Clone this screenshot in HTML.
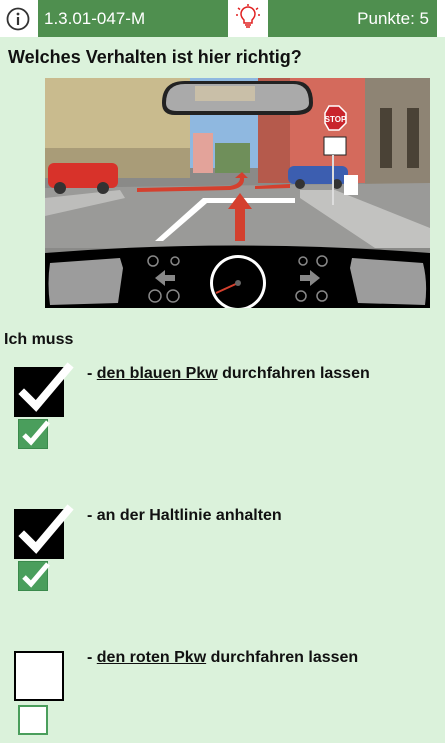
<!DOCTYPE html>
<html><head><meta charset="utf-8"><style>
*{margin:0;padding:0;box-sizing:border-box}
body{width:445px;height:743px;background:#dbf2db;font-family:"Liberation Sans",Arial,sans-serif;position:relative;overflow:hidden;color:#111}
.hdr{position:absolute;left:0;top:0;width:445px;height:37px;background:#fff}
.g{position:absolute;top:0;height:37px;background:#4f8f4f;color:#fff;font-size:17px;line-height:37px}
.q{position:absolute;left:8px;top:47px;font-size:18px;font-weight:bold}
.ich{position:absolute;left:4px;top:331px;font-size:16px;font-weight:bold}
.bb{position:absolute;left:14px;width:50px;height:50px;border:2px solid #000;background:#000}
.bb.e{background:#fff}
.sb{position:absolute;left:18px;width:30px;height:30px;background:#4a9e5c;border:1px solid #3a8a4c}
.sb.e{background:#fff;border:2px solid #4a9e5c}
.t{position:absolute;left:87px;font-size:16px;font-weight:bold}
.t u{text-decoration:underline}
</style></head><body>
<div class="hdr">
 <svg style="position:absolute;left:6px;top:7px" width="24" height="24" viewBox="0 0 24 24"><circle cx="12" cy="12" r="10.5" fill="none" stroke="#333" stroke-width="1.8"/><circle cx="12" cy="7" r="1.4" fill="#333"/><rect x="10.9" y="10" width="2.2" height="8" fill="#333"/></svg>
 <div class="g" style="left:38px;width:190px;padding-left:6px">1.3.01-047-M</div>
 <svg style="position:absolute;left:234px;top:3px" width="28" height="28" viewBox="0 0 28 28" fill="none" stroke="#e02020" stroke-width="1.5"><path d="M10 17c-2-2-3-3.5-3-6a7 7 0 0 1 14 0c0 2.5-1 4-3 6v3h-8z"/><path d="M11 22h6M12 24h4"/><path d="M14 1v2M4 5l2 1.5M24 5l-2 1.5M2 12h2M24 12h2"/></svg>
 <div class="g" style="left:268px;width:169px;text-align:right;padding-right:8px">Punkte: 5</div>
</div>
<div class="q">Welches Verhalten ist hier richtig?</div>
<svg style="position:absolute;left:45px;top:78px" width="385" height="230" viewBox="0 0 385 230">
 <rect width="385" height="230" fill="#8a8a88"/>
 <rect x="140" y="0" width="80" height="90" fill="#8fb8e0"/>
 <rect x="0" y="0" width="145" height="100" fill="#c9bb8e"/>
 <rect x="0" y="70" width="145" height="30" fill="#a99c78"/>
 <rect x="148" y="55" width="20" height="40" fill="#e3a39a"/>
 <rect x="170" y="65" width="35" height="30" fill="#6f8f5a"/>
 <rect x="213" y="0" width="107" height="105" fill="#b55a4c"/>
 <rect x="245" y="0" width="75" height="105" fill="#d46a5c"/>
 <rect x="320" y="0" width="65" height="120" fill="#8e8474"/>
 <rect x="335" y="30" width="12" height="60" fill="#4a4236"/>
 <rect x="362" y="30" width="12" height="60" fill="#4a4236"/>
 <path d="M0 110 L385 105 L385 170 L0 170Z" fill="#9a9a98"/>
 <path d="M0 120 L75 112 L80 120 L0 138Z" fill="#bdbdbb"/>
 <path d="M255 112 L290 112 L385 150 L385 170 L330 170 L255 120Z" fill="#c2c2c0"/>
 <path d="M110 163 L158 120 L250 120 L250 125 L162 125 L118 163Z" fill="#fff"/>
 <path d="M190 163 L190 131 L183 131 L195 115 L207 131 L200 131 L200 163Z" fill="#d4402e"/>
 <path d="M92 110 L185 108 Q195 106 195 100 L190 100 L197 94 L203 100 L199 100 Q200 110 185 112 L92 114Z" fill="#d4402e"/>
 <path d="M210 108 L245 106 L245 110 L210 111Z" fill="#d4402e"/>
 <rect x="3" y="85" width="70" height="25" rx="6" fill="#d8322a"/>
 <circle cx="15" cy="110" r="6" fill="#333"/><circle cx="58" cy="110" r="6" fill="#333"/>
 <rect x="243" y="88" width="60" height="18" rx="6" fill="#3c5eb0"/>
 <circle cx="255" cy="106" r="5" fill="#333"/><circle cx="292" cy="106" r="5" fill="#333"/>
 <polygon points="280,35 284,28 294,28 301,35 301,45 294,52 284,52 280,45" fill="#c9252c" stroke="#fff" stroke-width="1.5"/>
 <text x="290.5" y="44" font-family="Liberation Sans" font-size="8" font-weight="bold" fill="#fff" text-anchor="middle">STOP</text>
 <rect x="279" y="59" width="22" height="18" fill="#fff" stroke="#222"/>
 <rect x="287" y="77" width="2" height="50" fill="#ddd"/>
 <rect x="299" y="97" width="14" height="20" fill="#fff"/>
 <path d="M117 25 Q117 3 140 3 L250 3 Q268 3 268 25 Q268 37 250 37 L130 37 Q117 37 117 25Z" fill="#222"/>
 <path d="M121 25 Q121 6 140 6 L248 6 Q264 6 264 25 Q264 33 248 33 L132 33 Q121 33 121 25Z" fill="#aaa"/>
 <rect x="150" y="8" width="60" height="15" fill="#c9bfa8"/>
 <path d="M0 175 Q190 160 385 175 L385 230 L0 230Z" fill="#000"/>
 <path d="M5 185 L75 180 L78 190 L73 225 L5 227 Q2 205 5 185Z" fill="#9c9c9c"/>
 <path d="M307 180 L378 185 Q383 205 380 227 L313 225 L305 190Z" fill="#9c9c9c"/>
 <circle cx="193" cy="205" r="28" fill="#fff"/><circle cx="193" cy="205" r="25" fill="#000"/>
 <line x1="193" y1="205" x2="171" y2="215" stroke="#d4402e" stroke-width="2"/>
 <circle cx="193" cy="205" r="3" fill="#666"/>
 <path d="M110 200 L120 192 L120 197 L130 197 L130 203 L120 203 L120 208Z" fill="#888"/>
 <path d="M275 200 L265 192 L265 197 L255 197 L255 203 L265 203 L265 208Z" fill="#888"/>
 <g fill="none" stroke="#888" stroke-width="1.5"><circle cx="110" cy="218" r="6"/><circle cx="128" cy="218" r="6"/><circle cx="256" cy="218" r="5"/><circle cx="108" cy="183" r="5"/><circle cx="130" cy="183" r="4"/><circle cx="258" cy="183" r="4"/><circle cx="277" cy="183" r="5"/><circle cx="277" cy="218" r="5"/></g>
</svg>
<div class="ich">Ich muss</div>
<div class="bb" style="top:367px"></div>
<svg style="position:absolute;left:14px;top:362px" width="60" height="55" viewBox="0 0 60 55"><path d="M10 32 L22 44 L54 6" fill="none" stroke="#fff" stroke-width="8" stroke-linecap="square"/></svg>
<div class="sb" style="top:419px"></div>
<svg style="position:absolute;left:18px;top:415px" width="36" height="35" viewBox="0 0 36 35"><path d="M6 20 L13 27 L30 7" fill="none" stroke="#fff" stroke-width="5"/></svg>
<div class="t" style="top:365px">- <u>den blauen Pkw</u> durchfahren lassen</div>
<div class="bb" style="top:509px"></div>
<svg style="position:absolute;left:14px;top:504px" width="60" height="55" viewBox="0 0 60 55"><path d="M10 32 L22 44 L54 6" fill="none" stroke="#fff" stroke-width="8" stroke-linecap="square"/></svg>
<div class="sb" style="top:561px"></div>
<svg style="position:absolute;left:18px;top:557px" width="36" height="35" viewBox="0 0 36 35"><path d="M6 20 L13 27 L30 7" fill="none" stroke="#fff" stroke-width="5"/></svg>
<div class="t" style="top:507px">- an der Haltlinie anhalten</div>
<div class="bb e" style="top:651px"></div>
<div class="sb e" style="top:705px"></div>
<div class="t" style="top:649px">- <u>den roten Pkw</u> durchfahren lassen</div>
</body></html>
